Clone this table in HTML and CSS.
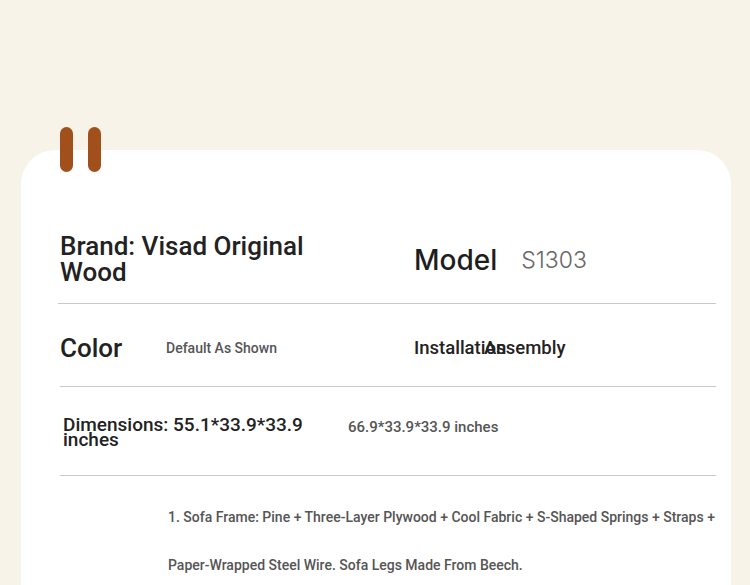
FILE: index.html
```html
<!DOCTYPE html>
<html>
<head>
<meta charset="utf-8">
<link rel="stylesheet" href="styles.css">
</head>
<body>
<div class="page">
  <div class="card">
    <div class="pins"><span class="pin"></span><span class="pin"></span></div>
    <div class="row row-brand">
      <div class="col-left"><div class="brand">Brand: Visad Original Wood</div></div>
      <div class="col-right model-wrap"><span class="model">Model</span><span class="model-val">S1303</span></div>
    </div>
    <div class="row row-color">
      <div class="col-left"><span class="color-label">Color</span><span class="color-val">Default As Shown</span></div>
      <div class="col-right"><span class="inst-label">Installation</span><span class="inst-val">Assembly</span></div>
    </div>
    <div class="row row-dim">
      <div class="dim-label">Dimensions: 55.1*33.9*33.9 inches</div>
      <div class="dim-val">66.9*33.9*33.9 inches</div>
    </div>
    <div class="desc">
      <p>1. Sofa Frame: Pine + Three-Layer Plywood + Cool Fabric + S-Shaped Springs + Straps + Paper-Wrapped Steel Wire. Sofa Legs Made From Beech.</p>
    </div>
  </div>
</div>
</body>
</html>
```

FILE: styles.css
```css
html, body {
  margin: 0;
  padding: 0;
}
body {
  background: #f7f3e8;
  font-family: Roboto, "Liberation Sans", sans-serif;
  color: #222;
  width: 750px;
  height: 585px;
  overflow: hidden;
}
.page {
  padding: 150px 19px 0 21px;
}
.card {
  position: relative;
  background: #fff;
  border-radius: 34px 34px 0 0;
  padding: 0 15px 0 39px;
  height: 435px;
}
.pins {
  position: absolute;
  left: 39px;
  top: -23px;
  display: flex;
  gap: 15px;
}
.pin {
  width: 13px;
  height: 45px;
  border-radius: 7px;
  background: #a2501b;
}
.row {
  display: flex;
  align-items: center;
}
.col-left {
  width: 354px;
  display: flex;
  align-items: center;
}
.col-right {
  display: flex;
  align-items: center;
}
.row-brand {
  padding: 83px 0 18px 2px;
  border-bottom: 1px solid #c9c9c9;
  margin-left: -2px;
}
.brand {
  font-size: 26px;
  line-height: 26px;
  font-weight: 500;
  width: 260px;
}
.model-wrap {
  font-family: Inter, Roboto, sans-serif;
  padding-top: 2px;
}
.model {
  font-size: 28px;
  font-weight: 500;
  color: #1e1e1e;
  line-height: 34px;
}
.model-val {
  margin-left: 24px;
  font-size: 23px;
  font-weight: 300;
  color: #666;
  line-height: 34px;
}
.row-color {
  height: 76px;
  padding-top: 6px;
  border-bottom: 1px solid #c9c9c9;
}
.color-label {
  font-size: 26px;
  font-weight: 500;
  width: 106px;
  line-height: 30px;
}
.color-val {
  font-size: 14px;
  font-weight: 500;
  color: #555;
}
.inst-label {
  font-size: 18.5px;
  font-weight: 500;
  width: 70px;
  white-space: nowrap;
}
.inst-val {
  font-size: 18.5px;
  font-weight: 500;
}
.row-dim {
  height: 88px;
  border-bottom: 1px solid #c9c9c9;
}
.dim-label {
  font-size: 19px;
  line-height: 15px;
  font-weight: 500;
  width: 262px;
  margin-right: 23px;
  padding-left: 3px;
  margin-top: 1px;
}
.dim-val {
  font-size: 15px;
  font-weight: 500;
  color: #555;
  margin-bottom: 8px;
}
.desc {
  padding: 17px 0 0 108px;
}
.desc p {
  margin: 0;
  font-size: 14px;
  line-height: 48px;
  font-weight: 500;
  color: #555;
}
```
